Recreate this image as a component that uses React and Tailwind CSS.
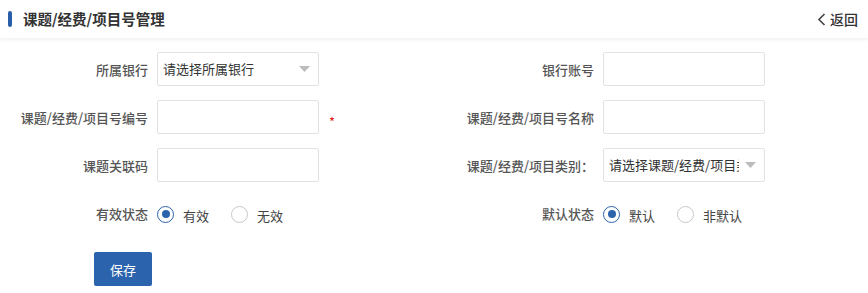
import React from "react";

const FONT = "font-['Microsoft_YaHei','Noto_Sans_CJK_SC',sans-serif]";

function Field({ label, labelW, children, extra }) {
  return (
    <div className="flex items-center h-[34px]">
      <div className="text-right text-[13px] font-medium text-[#555] shrink-0" style={{ width: labelW }}>
        {label}
      </div>
      <div className="ml-[9px] flex items-center">{children}</div>
      {extra}
    </div>
  );
}

function TextBox() {
  return <div className="w-[162px] h-[34px] border border-[#e2e2e2] rounded-[2px] bg-white" />;
}

function Select({ placeholder }) {
  return (
    <div className="w-[162px] h-[34px] border border-[#e2e2e2] rounded-[2px] bg-white flex items-center pl-[5px] pr-[8px]">
      <span className="text-[13px] leading-[20px] text-[#333] whitespace-nowrap overflow-hidden flex-1 min-w-0 mr-[6px]">
        {placeholder}
      </span>
      <svg width="11" height="6" viewBox="0 0 11 6" className="shrink-0">
        <polygon points="0,0 11,0 5.5,6" fill="#bcbcbc" />
      </svg>
    </div>
  );
}

function Radio({ checked, label }) {
  return (
    <div className="flex items-center">
      <span
        className={`w-[17px] h-[17px] rounded-full border bg-white flex items-center justify-center ${checked ? "border-[#2b63ad]" : "border-[#c8c8c8]"}`}
      >
        {checked && <span className="w-[8px] h-[8px] rounded-full bg-[#2b63ad]" />}
      </span>
      <span className="ml-[9px] mt-[3px] text-[13px] text-[#444]">{label}</span>
    </div>
  );
}

export default function App() {
  return (
    <div className={`w-[868px] h-[293px] bg-white overflow-hidden leading-none ${FONT}`}>
      <div className="h-[38px] flex items-center justify-between pl-[8px] pr-[10px] shadow-[0_2px_4px_rgba(0,0,0,0.06)] relative">
        <div className="flex items-center">
          <span className="w-[4px] h-[16px] rounded-[2px] bg-[#2a5ea8]" />
          <span className="ml-[11px] text-[14.5px] font-bold text-[#333]">课题/经费/项目号管理</span>
        </div>
        <div className="flex items-center text-[14px] font-medium text-[#333]">
          <svg width="9" height="13" viewBox="0 0 9 13" className="mr-[4px]">
            <polyline points="7.5,1 2,6.5 7.5,12" fill="none" stroke="#444" strokeWidth="1.6" />
          </svg>
          返回
        </div>
      </div>

      <div className="pt-[14px] flex">
        <div className="w-[434px] flex flex-col gap-[14px]">
          <Field label="所属银行" labelW={148}>
            <Select placeholder="请选择所属银行" />
          </Field>
          <Field
            label="课题/经费/项目号编号"
            labelW={148}
            extra={<span className="ml-[10px] mt-[8px] text-[13px] text-[#e02020]">*</span>}
          >
            <TextBox />
          </Field>
          <Field label="课题关联码" labelW={148}>
            <TextBox />
          </Field>
          <Field label="有效状态" labelW={148}>
            <div className="flex items-center gap-[22px] pt-[2px]">
              <Radio checked label="有效" />
              <Radio label="无效" />
            </div>
          </Field>
          <div className="pl-[94px] pt-[8px]">
            <button className="w-[58px] h-[34px] rounded-[2px] bg-[#2b63ad] text-white text-[13px]">保存</button>
          </div>
        </div>
        <div className="w-[434px] flex flex-col gap-[14px]">
          <Field label="银行账号" labelW={160}>
            <TextBox />
          </Field>
          <Field label="课题/经费/项目号名称" labelW={160}>
            <TextBox />
          </Field>
          <Field label="课题/经费/项目类别：" labelW={160}>
            <Select placeholder="请选择课题/经费/项目类别" />
          </Field>
          <Field label="默认状态" labelW={160}>
            <div className="flex items-center gap-[22px] pt-[2px]">
              <Radio checked label="默认" />
              <Radio label="非默认" />
            </div>
          </Field>
        </div>
      </div>
    </div>
  );
}
